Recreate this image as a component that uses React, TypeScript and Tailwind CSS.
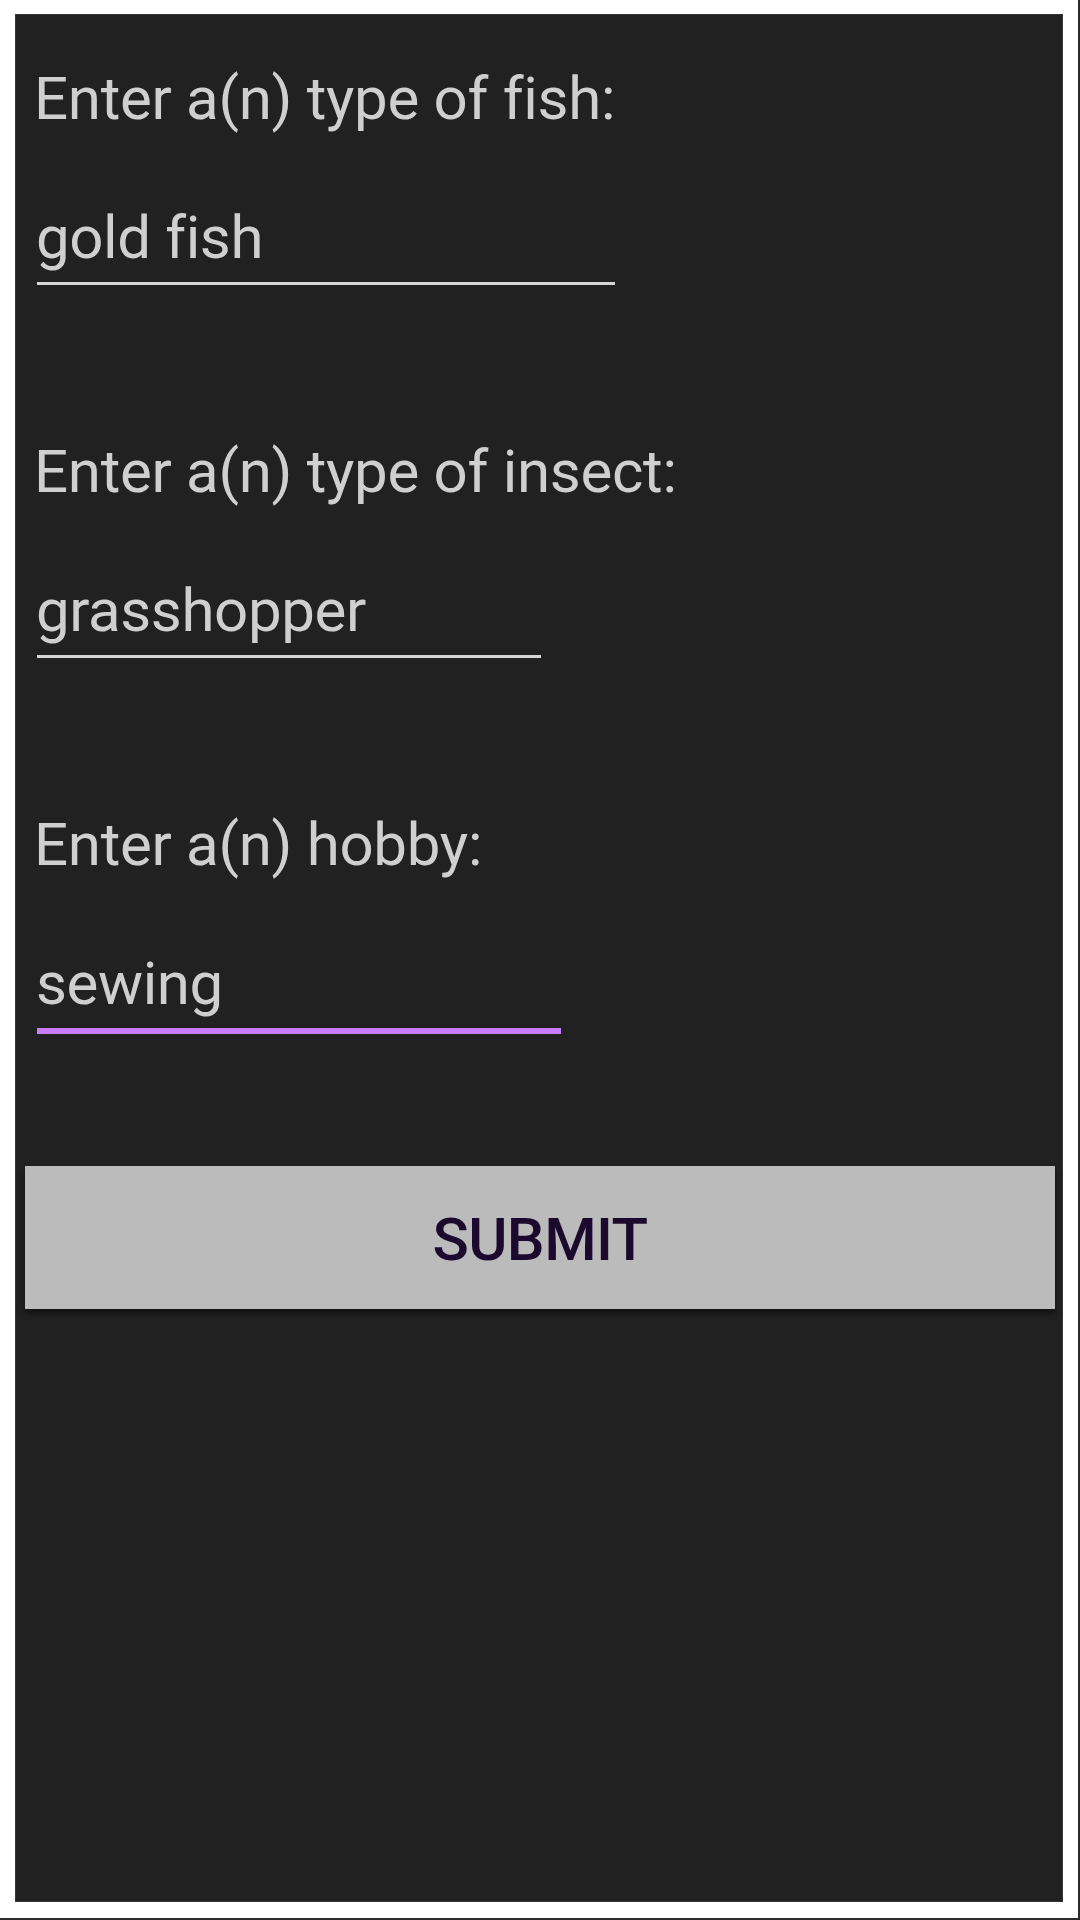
import { useState } from 'react';

const fields = [
  { label: 'Enter a(n) type of fish:', value: 'gold fish', width: 'w-[578px]', focused: false },
  { label: 'Enter a(n) type of insect:', value: 'grasshopper', width: 'w-[504px]', focused: false },
  { label: 'Enter a(n) hobby:', value: 'sewing', width: 'w-[524px]', focused: true },
];

export default function App() {
  const [values, setValues] = useState(fields.map(f => f.value));

  return (
    <div className="w-[1080px] h-[1920px] bg-white border-r-2 border-b-2 border-[#2b2b2b] overflow-hidden font-['Roboto',sans-serif]">
      <div className="ml-[15px] mt-[14px] w-[1048px] h-[1888px] bg-[#212121] border border-[#363636] flex flex-col">
        {fields.map((field, i) => (
          <div key={field.label} className={i === 0 ? 'mt-[49px]' : 'mt-[152px]'}>
            <div className="pl-[18px] text-[60px] leading-[70px] tracking-[-0.3px] text-[#cfcfcf]">{field.label}</div>
            <div className={`ml-[21px] mt-[69px] ${field.width}`}>
              <input
                className="block w-full bg-transparent outline-none -ml-[1px] text-[60px] leading-[70px] h-[70px] tracking-[-0.4px] text-[#cfcfcf]"
                value={values[i]}
                onChange={e => setValues(v => v.map((x, j) => (j === i ? e.target.value : x)))}
              />
              <div
                className={
                  field.focused
                    ? 'mt-[9px] h-[6px] bg-[#c97cfc]'
                    : 'mt-[9px] h-[3px] bg-[#d6d6d6]'
                }
              />
            </div>
          </div>
        ))}

        <button className="ml-[9px] mt-[132px] w-[1030px] h-[143px] bg-[#bbbbbb] shadow-[0_5px_6px_rgba(0,0,0,0.45)] flex items-center justify-center">
          <span className="text-[60px] leading-[70px] font-medium tracking-[-0.6px] text-[#1c0a2e] pt-[4px]">SUBMIT</span>
        </button>
      </div>
    </div>
  );
}
